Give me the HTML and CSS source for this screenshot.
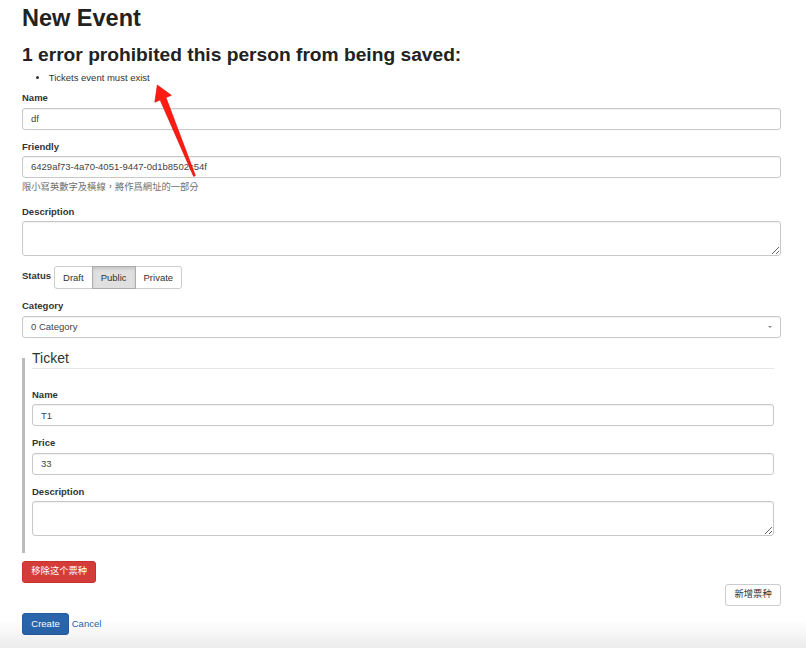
FILE: index.html
```html
<!DOCTYPE html>
<html>
<head>
<meta charset="utf-8">
<link rel="stylesheet" href="styles.css">
</head>
<body>
<div class="page">
  <h1 class="title">New Event</h1>
  <div class="errors">
    <h2 class="errors-title">1 error prohibited this person from being saved:</h2>
    <ul class="errors-list"><li>Tickets event must exist</li></ul>
  </div>
  <form class="form">
    <div class="group">
      <label class="lbl">Name</label>
      <input class="field" type="text" value="df">
    </div>
    <div class="group">
      <label class="lbl">Friendly</label>
      <input class="field" type="text" value="6429af73-4a70-4051-9447-0d1b8502c54f">
      <p class="help">限小寫英數字及橫線，將作爲網址的一部分</p>
    </div>
    <div class="group">
      <label class="lbl">Description</label>
      <textarea class="field area"></textarea>
    </div>
    <div class="group status">
      <label class="lbl inline">Status</label>
      <div class="btn-group">
        <button type="button" class="seg">Draft</button>
        <button type="button" class="seg active">Public</button>
        <button type="button" class="seg">Private</button>
      </div>
    </div>
    <div class="group">
      <label class="lbl">Category</label>
      <div class="select-wrap">
        <select class="field select"><option>0 Category</option></select>
      </div>
    </div>
    <fieldset class="ticket">
      <legend class="ticket-legend">Ticket</legend>
      <div class="group">
        <label class="lbl">Name</label>
        <input class="field" type="text" value="T1">
      </div>
      <div class="group">
        <label class="lbl">Price</label>
        <input class="field" type="text" value="33">
      </div>
      <div class="group">
        <label class="lbl">Description</label>
        <textarea class="field area"></textarea>
      </div>
    </fieldset>
    <div class="remove-row"><button type="button" class="btn btn-danger">移除这个票种</button></div>
    <div class="add-row"><button type="button" class="btn btn-default">新增票种</button></div>
    <div class="actions"><button type="button" class="btn btn-primary">Create</button> <a class="cancel" href="#">Cancel</a></div>
  </form>
</div>
<svg class="annotation" width="806" height="648" viewBox="0 0 806 648">
  <polygon points="157.3,85 171.4,95.3 166,97.6 195.4,175.6 193.6,176.4 160.1,100 154.8,102.3" fill="#ff1a12" stroke="#d40d08" stroke-width="0.6" stroke-linejoin="round"/>
</svg>
</body>
</html>
```
FILE: styles.css
```css
html, body {
  margin: 0;
  padding: 0;
  background: #fff;
}
body {
  font-family: "Liberation Sans", Arial, "Noto Sans CJK SC", sans-serif;
  font-size: 9.5px;
  line-height: 13.33px;
  color: #333;
  position: relative;
  min-height: 648px;
}
body::after {
  content: "";
  position: fixed;
  left: 0;
  right: 0;
  bottom: 0;
  height: 28px;
  background: linear-gradient(rgba(0,0,0,0), rgba(0,0,0,0.075));
  pointer-events: none;
}
.page {
  padding: 0 25px 0 22px;
}
.title {
  margin: 5px 0 0;
  font-size: 23.5px;
  line-height: 26.4px;
  font-weight: bold;
  color: #222;
}
.errors-title {
  margin: 13px 0 5px;
  font-size: 19.2px;
  line-height: 22px;
  font-weight: bold;
  color: #222;
}
.errors-list {
  margin: 0 0 6.6px;
  padding-left: 26.7px;
}
.form {
  margin: 0;
}
.group {
  margin-bottom: 10px;
}
.lbl {
  display: block;
  font-weight: bold;
  margin-bottom: 3px;
  line-height: 13.33px;
}
.field {
  display: block;
  box-sizing: border-box;
  width: 100%;
  height: 22px;
  margin: 0;
  padding: 0 8px;
  border: 1px solid #c8c8c8;
  border-radius: 3px;
  background: #fff;
  font-family: "Liberation Sans", Arial, "Noto Sans CJK SC", sans-serif;
  font-size: 9.5px;
  color: #444;
  box-shadow: inset 0 1px 1px rgba(0,0,0,0.06);
}
.area {
  height: 35px;
  padding: 4px 8px;
  resize: vertical;
}
.help {
  margin: 3.33px 0 0;
  color: #6f6f6f;
  font-family: "Liberation Sans", Arial, "Noto Sans CJK TC", sans-serif;
  font-size: 9.3px;
}
.status {
  display: flex;
  align-items: center;
  gap: 3px;
}
.lbl.inline {
  display: block;
  margin-bottom: 3px;
}
.btn-group {
  display: flex;
}
.seg {
  font-family: "Liberation Sans", Arial, sans-serif;
  font-size: 9.5px;
  line-height: 13.33px;
  color: #333;
  background: #fff;
  border: 1px solid #ccc;
  padding: 4px 8px;
  margin: 0;
  margin-left: -1px;
}
.seg:first-child {
  margin-left: 0;
  border-radius: 3px 0 0 3px;
}
.seg:last-child {
  border-radius: 0 3px 3px 0;
}
.seg.active {
  background: #e0e0e0;
  border-color: #adadad;
  box-shadow: inset 0 2px 3px rgba(0,0,0,0.12);
  position: relative;
}
.select-wrap {
  position: relative;
}
.select {
  -webkit-appearance: none;
  appearance: none;
  padding: 0 8px;
}
.select-wrap::after {
  content: "";
  position: absolute;
  right: 9px;
  top: 10px;
  border-left: 2px solid transparent;
  border-right: 2px solid transparent;
  border-top: 2.5px solid #888;
}
.ticket {
  margin: 0 0 8px;
  padding: 0 7px 7px;
  border: 0;
  border-left: 3px solid #bcbcbc;
  min-width: 0;
}
.ticket-legend {
  display: block;
  width: 100%;
  box-sizing: border-box;
  padding: 0;
  margin: 0 0 19.5px;
  font-size: 14px;
  line-height: 20px;
  color: #333;
  border-bottom: 1px solid #e5e5e5;
}
.btn {
  display: inline-block;
  margin: 0;
  padding: 3.33px 8.3px;
  font-family: "Liberation Sans", Arial, "Noto Sans CJK SC", sans-serif;
  font-size: 9.3px;
  line-height: 13.33px;
  border: 1px solid transparent;
  border-radius: 3px;
  cursor: pointer;
}
.btn-danger {
  color: #fff;
  background: #d43c39;
  border-color: #c9302c;
}
.btn-default {
  color: #333;
  background: #fff;
  border-color: #ccc;
}
.btn-primary {
  color: #fff;
  background: #2a66ac;
  border-color: #255c9c;
  font-size: 9.5px;
}
.add-row {
  margin-top: 1px;
  text-align: right;
}
.actions {
  margin-top: 7px;
}
.cancel {
  color: #2a62a8;
  text-decoration: none;
}
.annotation {
  position: absolute;
  left: 0;
  top: 0;
  pointer-events: none;
}
```
